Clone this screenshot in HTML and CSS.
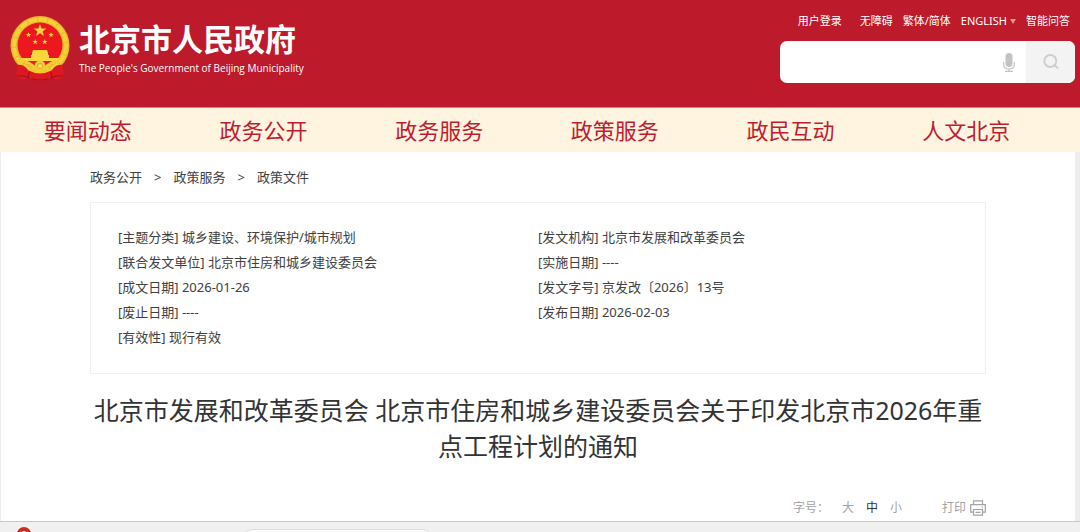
FILE: index.html
```html
<!DOCTYPE html>
<html lang="zh-CN">
<head>
<meta charset="utf-8">
<meta name="viewport" content="width=device-width, initial-scale=1">
<title>北京市人民政府</title>
<link rel="stylesheet" href="styles.css">
</head>
<body>
<header class="header">
  <a class="brand" href="#">
    <svg class="emblem" viewBox="0 0 60 66" aria-hidden="true">
      <circle cx="30" cy="29.500" r="29.500" fill="#e9b82a"/>
      <circle cx="30" cy="29.500" r="26" fill="none" stroke="#f6d037" stroke-width="4" stroke-dasharray="9 1"/>
      <circle cx="30" cy="29" r="22.500" fill="#ed1720"/>
      <path d="M7 49Q14 48 18 54Q30 60 42 54Q46 48 53 49L54 61 46 64 41 61 37 64 30 65 23 64 19 61 14 64 6 61Z" fill="#dc1820"/>
      <g fill="#f9d63c">
        <path d="M30 8l1.600 4.500h4.800l-3.800 2.900 1.400 4.600-4-2.800-4 2.800 1.400-4.600-3.800-2.900h4.800z"/>
        <path d="M18.500 16l.7 2h2.100l-1.700 1.300.6 2-1.700-1.200-1.700 1.200.6-2-1.700-1.300h2.100zM41 16l.7 2h2.100l-1.700 1.300.6 2-1.700-1.200-1.700 1.200.6-2-1.700-1.300h2.100zM25.200 23l.7 2h2.100l-1.700 1.300.6 2-1.700-1.200-1.700 1.200.6-2-1.700-1.300h2.100zM34.800 23l.7 2h2.100l-1.700 1.300.6 2-1.700-1.200-1.700 1.200.6-2-1.700-1.300h2.100z"/>
        <path d="M23 34h14l1 3H22zM22 37h16v2h1v3H21v-3h1zM11 42h38v3H11z"/>
      </g>
      <path d="M11 45Q20 46 25 52M49 45Q40 46 35 52" fill="none" stroke="#f5cc38" stroke-width="3"/>
      <path d="M19 53Q30 59 41 53" fill="none" stroke="#f4c52f" stroke-width="3"/>
      <circle cx="30" cy="50" r="5.500" fill="#f3c934"/>
      <circle cx="30" cy="50" r="2.500" fill="#f8df5c" stroke="#e5ad22"/>
      <path d="M7 60L14 60 19 62M53 60L46 60 41 62M19 56L18 62M41 56L42 62M22 63Q30 65 38 63" fill="none" stroke="#a51119" stroke-width="1.200"/>
    </svg>
    <span class="brand-text">
      <span class="brand-name">北京市人民政府</span>
      <span class="brand-sub">The People's Government of Beijing Municipality</span>
    </span>
  </a>
  <div class="header-side">
    <nav class="top-links" aria-label="快捷链接">
      <a class="login" href="#">用户登录</a>
      <a href="#">无障碍</a>
      <a href="#">繁体/简体</a>
      <a class="lang" href="#">ENGLISH <span class="caret"></span></a>
      <a href="#">智能问答</a>
    </nav>
    <form class="search">
      <input class="search-input" type="text" aria-label="搜索">
      <button class="mic" type="button" aria-label="语音输入">
        <svg width="12" height="19" viewBox="0 0 12 19"><rect x="2.500" y="0" width="7" height="14" rx="3.500" fill="#c3c3c3"/><path d="M.7 9v3Q1 16 6 16t5.300-4V9M6 16v2M2 18.300h8" fill="none" stroke="#c3c3c3" stroke-width="1.200"/></svg>
      </button>
      <button class="search-button" type="button" aria-label="搜索">
        <svg width="16" height="16" viewBox="0 0 16 16" fill="none" stroke="#cdcdcd" stroke-width="1.800"><circle cx="7.300" cy="7" r="6"/><path d="M11.500 11.200L15 14.500"/></svg>
      </button>
    </form>
  </div>
</header>
<nav class="main-nav" aria-label="主导航">
  <a href="#">要闻动态</a><a href="#">政务公开</a><a href="#">政务服务</a><a href="#">政策服务</a><a href="#">政民互动</a><a href="#">人文北京</a>
</nav>
<main class="article">
  <nav class="crumbs" aria-label="位置">
    <a href="#">政务公开</a><span>&gt;</span><a href="#">政策服务</a><span>&gt;</span><a href="#">政策文件</a>
  </nav>
  <div class="info">
    <ul class="info-list">
      <li>[主题分类] 城乡建设、环境保护/城市规划</li>
      <li>[联合发文单位] 北京市住房和城乡建设委员会</li>
      <li>[成文日期] 2026-01-26</li>
      <li>[废止日期] ----</li>
      <li>[有效性] 现行有效</li>
    </ul>
    <ul class="info-list">
      <li>[发文机构] 北京市发展和改革委员会</li>
      <li>[实施日期] ----</li>
      <li>[发文字号] 京发改〔2026〕13号</li>
      <li>[发布日期] 2026-02-03</li>
    </ul>
  </div>
  <h1 class="title">北京市发展和改革委员会 北京市住房和城乡建设委员会关于印发北京市2026年重点工程计划的通知</h1>
  <div class="tools">
    <span class="tools-label">字号：</span>
    <div class="sizes">
      <button type="button">大</button><button class="current" type="button">中</button><button type="button">小</button>
    </div>
    <button class="print" type="button">打印
      <svg width="16" height="16" viewBox="0 0 16 16" fill="none" stroke="#a3a3a3" stroke-width="1.200"><path d="M3.500 4.500V.8h9v3.700M3.500 12.200H.7V4.700h14.600v7.500h-2.800M3.500 9.500h9v5.700h-9zM5.500 12.300h5M11.500 7h1.500"/></svg>
    </button>
  </div>
</main>
<footer class="taskbar">
  <span class="taskbar-dot"></span>
  <span class="taskbar-pill"></span>
</footer>
</body>
</html>
```

FILE: styles.css
```css
* { box-sizing: border-box; }

body {
  margin: 0;
  min-height: 100vh;
  display: flex;
  flex-direction: column;
  font-family: "Noto Sans", "Noto Sans CJK SC", sans-serif;
  font-size: 13px;
  color: #404040;
  background: #fff;
}

a { color: inherit; text-decoration: none; }

button {
  padding: 0;
  border: 0;
  background: none;
  font: inherit;
  color: inherit;
}

.header {
  display: flex;
  justify-content: space-between;
  align-items: flex-start;
  padding: 12px 5px 24px 10px;
  background: #bd1a2c;
  color: #fff;
  border-bottom: 1px solid #d8837d;
}

.brand { display: flex; gap: 9px; padding-top: 4px; }
.emblem { width: 60px; height: 66px; }
.brand-text { display: flex; flex-direction: column; padding-top: 5px; }
.brand-name { font-size: 31px; line-height: 36px; font-weight: 700; }
.brand-sub {
  padding-top: 3px;
  font-family: "Open Sans", "Noto Sans", sans-serif;
  font-size: 10px;
  line-height: 16px;
}

.header-side { width: 295px; }

.top-links {
  display: flex;
  justify-content: flex-end;
  gap: 10px;
  padding-right: 5px;
  font-size: 11px;
  line-height: 18px;
  white-space: nowrap;
}
.login { margin-right: 8px; }
.lang { display: flex; align-items: center; gap: 3px; }
.caret {
  border: 3px solid transparent;
  border-top: 5px solid #d9a379;
  border-bottom: 0;
}

.search {
  display: flex;
  height: 42px;
  margin-top: 11px;
  border-radius: 7px;
  overflow: hidden;
  background: #fff;
}
.search-input {
  flex: 1;
  min-width: 0;
  padding: 0 12px;
  border: 0;
  outline: 0;
  background: none;
  font: inherit;
}
.mic { width: 34px; display: grid; place-items: center; }
.search-button {
  width: 49px;
  display: grid;
  place-items: center;
  background: #f3f3f3;
}

.main-nav {
  display: grid;
  grid-template-columns: repeat(6, 1fr);
  padding-right: 26px;
  background: #fef4df;
  color: #bf1c2f;
  font-size: 22px;
  line-height: 44px;
  text-align: center;
}

.article {
  flex: 1;
  padding: 0 89px;
  border-left: 1px solid #eee;
  border-right: 5px solid #ececec;
}

.crumbs {
  display: flex;
  gap: 12px;
  padding: 13px 0;
  line-height: 24px;
}

.info {
  display: grid;
  grid-template-columns: 1fr 1fr;
  padding: 22px 27px 23px;
  border: 1px solid #f1f1ec;
}
.info-list {
  margin: 0;
  padding: 0;
  list-style: none;
  line-height: 25px;
}

.title {
  margin: 18px 0 0;
  font-size: 25px;
  line-height: 36px;
  font-weight: 400;
  color: #333;
  text-align: center;
  word-break: break-all;
}

.tools {
  display: flex;
  justify-content: flex-end;
  align-items: center;
  padding: 33px 0 2px;
  font-size: 12px;
  line-height: 22px;
  color: #a3a3a3;
}
.sizes { display: flex; gap: 12px; margin: 0 40px 0 13px; }
.current { color: #333; }
.print { display: flex; align-items: center; gap: 4px; }

.taskbar {
  display: flex;
  height: 11px;
  padding-left: 17px;
  overflow: hidden;
  background: #f0f0f0;
  border-top: 1px solid #c9c9c9;
}
.taskbar-dot {
  flex: none;
  width: 14px;
  height: 14px;
  margin: 5px 210px 0 0;
  border: 4px solid #c82b20;
  border-radius: 50%;
}
.taskbar-pill {
  flex: none;
  width: 193px;
  height: 24px;
  margin-top: 7px;
  border: 1px solid #dedede;
  border-radius: 12px;
  background: #fcfcfc;
}
```
